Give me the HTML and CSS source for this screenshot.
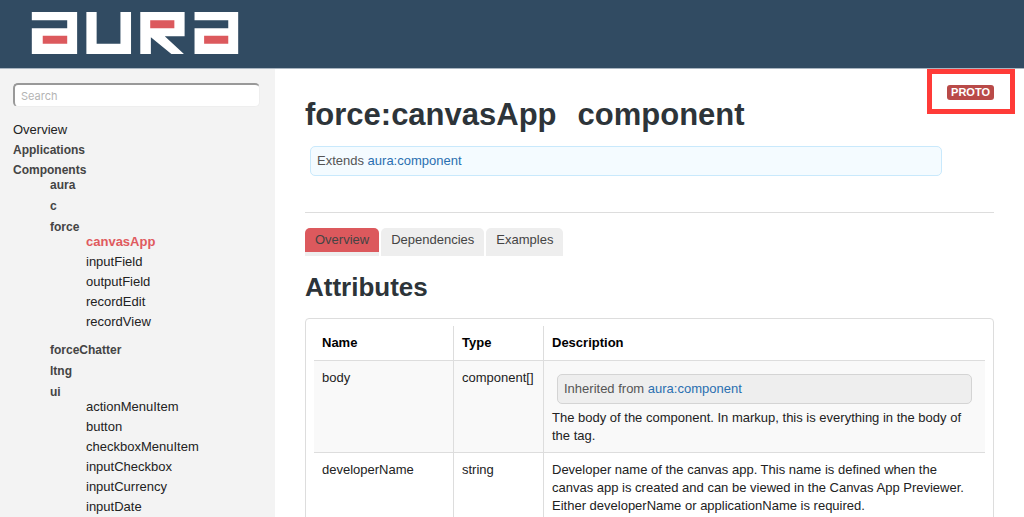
FILE: index.html
```html
<!DOCTYPE html>
<html lang="en">
<head>
<meta charset="utf-8">
<title>force:canvasApp component</title>
<link rel="stylesheet" href="styles.css">
</head>
<body>
<header class="topbar">
  <svg class="logo" viewBox="93 37 624 127" role="img" aria-label="aura">
    <path fill="#fff" d="M93 37H230V164H93V86H200V62H93ZM258 37H289V133H361V37H393V164H258ZM421 37H555V110H495L553 164H515L453 113V164H421ZM585 37H717V164H585V86H687V62H585Z"/>
    <path fill="#dc595d" d="M126 109H200V133H126ZM451 62H524V86H451ZM614 109H687V133H614Z"/>
  </svg>
</header>
<div class="layout">
  <nav class="sidebar">
    <input class="search" type="search" placeholder="Search" aria-label="Search">
    <ul class="tree">
      <li><a class="root" href="#">Overview</a></li>
      <li><a class="section" href="#">Applications</a></li>
      <li><a class="section" href="#">Components</a>
        <ul class="groups">
          <li><a class="group" href="#">aura</a></li>
          <li><a class="group" href="#">c</a></li>
          <li><a class="group" href="#">force</a>
            <ul class="leaves">
              <li><a class="current" href="#">canvasApp</a></li>
              <li><a href="#">inputField</a></li>
              <li><a href="#">outputField</a></li>
              <li><a href="#">recordEdit</a></li>
              <li><a href="#">recordView</a></li>
            </ul>
          </li>
          <li><a class="group" href="#">forceChatter</a></li>
          <li><a class="group" href="#">ltng</a></li>
          <li><a class="group" href="#">ui</a>
            <ul class="leaves">
              <li><a href="#">actionMenuItem</a></li>
              <li><a href="#">button</a></li>
              <li><a href="#">checkboxMenuItem</a></li>
              <li><a href="#">inputCheckbox</a></li>
              <li><a href="#">inputCurrency</a></li>
              <li><a href="#">inputDate</a></li>
            </ul>
          </li>
        </ul>
      </li>
    </ul>
  </nav>
  <main class="content">
    <div class="intro">
      <div class="intro-text">
        <h1><span>force:canvasApp</span><span>component</span></h1>
        <p class="note note-info">Extends <a href="#">aura:component</a></p>
      </div>
      <div class="badge-holder"><span class="badge">PROTO</span></div>
    </div>
    <div class="tabs" role="tablist">
      <button class="tab tab-active" role="tab" aria-selected="true">Overview</button>
      <button class="tab" role="tab" aria-selected="false">Dependencies</button>
      <button class="tab" role="tab" aria-selected="false">Examples</button>
    </div>
    <h2>Attributes</h2>
    <div class="panel">
      <table>
        <thead>
          <tr><th class="col-name">Name</th><th class="col-type">Type</th><th>Description</th></tr>
        </thead>
        <tbody>
          <tr>
            <td>body</td>
            <td>component[]</td>
            <td><p class="note">Inherited from <a href="#">aura:component</a></p>The body of the component. In markup, this is everything in the body of the tag.</td>
          </tr>
          <tr>
            <td>developerName</td>
            <td>string</td>
            <td>Developer name of the canvas app. This name is defined when the canvas app is created and can be viewed in the Canvas App Previewer. Either developerName or applicationName is required.</td>
          </tr>
        </tbody>
      </table>
    </div>
  </main>
</div>
</body>
</html>
```
FILE: styles.css
```css
* { box-sizing: border-box; }

body {
  display: flex;
  flex-direction: column;
  height: 100vh;
  margin: 0;
  overflow: hidden;
  font: 13px/18px "Liberation Sans", Arial, sans-serif;
  color: #222;
  background: #fff;
}

h1, h2, p, ul { margin: 0; padding: 0; }
ul { list-style: none; }
a { color: inherit; text-decoration: none; }

.topbar {
  flex: none;
  padding: 12px 31px 14px;
  background: #314b62;
  border-bottom: 1px solid #a9b5c0;
}
.logo { display: block; width: 208px; height: 42px; }

.layout { display: flex; flex: 1; min-height: 0; }

.sidebar {
  flex: none;
  width: 275px;
  padding: 14px 15px 0 13px;
  background: #f3f3f3;
  overflow: hidden;
}
.search {
  display: block;
  width: 100%;
  height: 24px;
  margin-bottom: 15px;
  padding: 0 6px;
  font: 11px/16px Inter, sans-serif;
  background: #fff;
  border: 1px solid #eee;
  border-top: 2px solid #999;
  border-left: 2px solid #999;
  border-radius: 5px;
  appearance: none;
}
.search::placeholder { color: #b4b4b4; opacity: 1; }

.tree a { display: block; line-height: 16px; }
.tree > li + li { margin-top: 4px; }
.tree .section { font-size: 12px; font-weight: bold; color: #444; }
.groups { padding-left: 37px; }
.groups > li { padding-bottom: 7px; }
.tree .group { font-size: 12px; line-height: 14px; font-weight: bold; color: #444; }
.leaves { padding: 0 0 2px 36px; }
.leaves > li { padding-bottom: 4px; }
.tree .current { font-weight: bold; color: #e05a5e; }

.content { flex: 1; min-width: 0; padding: 16px 30px 0; overflow: hidden; }

.intro {
  display: flex;
  align-items: flex-start;
  padding-bottom: 36px;
  border-bottom: 1px solid #ddd;
}
.intro-text { flex: 1; padding-top: 10px; }
h1 {
  display: flex;
  gap: 21px;
  font-size: 31px;
  line-height: 40px;
  color: #2d3439;
}

.note {
  margin: 5px;
  padding: 5px 6px;
  color: #555;
  background: #eee;
  border: 1px solid #d4d4d4;
  border-radius: 5px;
}
.note a { color: #2a6fb0; }
.note-info { margin: 11px 5px 0; background: #f4fbff; border-color: #c9e9fc; }

.badge-holder { position: relative; }
.badge-holder::after {
  content: "";
  position: absolute;
  inset: -16px -21px -14px -20px;
  border: 5px solid #ff3b38;
}
.badge {
  display: block;
  padding: 0 4px;
  font-size: 11px;
  line-height: 15px;
  font-weight: bold;
  color: #fff;
  background: #b94a48;
  border-radius: 3px;
}

.tabs { display: flex; gap: 2px; margin: 15px 0; }
.tab {
  padding: 3px 10px;
  font: inherit;
  color: #444;
  background: #eee;
  border: 0 solid #eee;
  border-bottom-width: 4px;
  border-radius: 5px 5px 0 0;
}
.tab-active { background: #dc595d; background-clip: padding-box; }

h2 { margin-bottom: 15px; font-size: 26px; line-height: 32px; color: #2d3439; }

.panel { padding: 7px 8px; border: 1px solid #ddd; border-radius: 4px; }
table { width: 100%; border-collapse: separate; border-spacing: 0; table-layout: fixed; }
th, td {
  padding: 8px 8px 7px;
  text-align: left;
  vertical-align: top;
  border-bottom: 1px solid #ddd;
}
th { padding-bottom: 8px; color: #000; }
th + th, td + td { border-left: 1px solid #ddd; }
.col-name { width: 139px; }
.col-type { width: 90px; }
tbody tr:nth-child(odd) { background: #f9f9f9; }
```
